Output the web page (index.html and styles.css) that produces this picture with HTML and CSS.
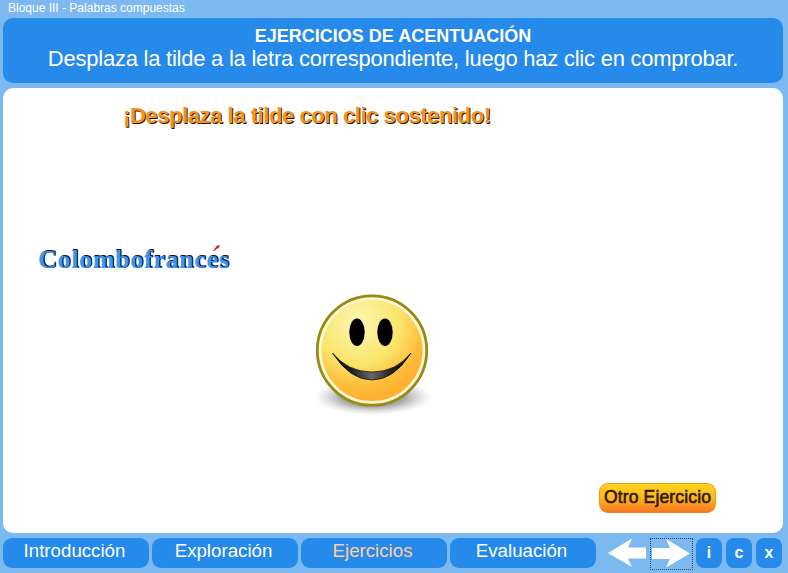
FILE: index.html
```html
<!DOCTYPE html>
<html lang="es">
<head>
<meta charset="utf-8">
<title>Bloque III - Palabras compuestas</title>
<link rel="stylesheet" href="styles.css">
</head>
<body>
<div class="app">
  <div class="block-title"><span>Bloque III - Palabras compuestas</span></div>
  <header class="header">
    <h1><span>EJERCICIOS DE ACENTUACIÓN</span></h1>
    <p><span>Desplaza la tilde a la letra correspondiente, luego haz clic en comprobar.</span></p>
  </header>
  <main class="stage">
    <h2 class="hint"><span>¡Desplaza la tilde con clic sostenido!</span></h2>
    <div class="word"><span>Colombofranc<span class="accented">e<svg class="tilde" width="9" height="7" viewBox="0 0 9 7"><path d="M1 6 5 0.5 8 0.5 7.5 2 2 6Z"/></svg></span>s</span></div>
    <svg class="smiley" width="120" height="126" viewBox="0 0 120 126">
      <defs>
        <radialGradient id="shadow"><stop offset="0" stop-color="#555"/><stop offset=".55" stop-color="#888" stop-opacity=".7"/><stop offset="1" stop-color="#bbb" stop-opacity="0"/></radialGradient>
        <radialGradient id="face" gradientUnits="userSpaceOnUse" cx="47" cy="32" r="76"><stop offset="0" stop-color="#fcf7b4"/><stop offset=".55" stop-color="#f9e56a"/><stop offset=".83" stop-color="#ffbd3c"/><stop offset="1" stop-color="#ffb030"/></radialGradient>
        <linearGradient id="mouth" x1="0" x2="1"><stop offset="0" stop-color="#000"/><stop offset=".25" stop-color="#222"/><stop offset=".5" stop-color="#666"/><stop offset=".75" stop-color="#222"/><stop offset="1" stop-color="#000"/></linearGradient>
      </defs>
      <ellipse cx="61" cy="106" rx="59" ry="18" fill="url(#shadow)"/>
      <circle cx="60" cy="59.500" r="54.7" fill="#fff8cf" stroke="#978b16" stroke-width="2.800"/>
      <circle cx="60" cy="59.500" r="50.5" fill="url(#face)"/>
      <ellipse cx="45" cy="41.200" rx="7.700" ry="13.700"/>
      <ellipse cx="73" cy="41.200" rx="7.700" ry="13.700"/>
      <path d="M20.500 62Q36 81 60 81T99 62Q82 89 60 89T20.500 62Z" fill="url(#mouth)" stroke="#000" stroke-width=".7"/>
    </svg>
    <button class="another"><span>Otro Ejercicio</span></button>
  </main>
  <nav class="nav">
    <a class="tab"><span>Introducción</span></a>
    <a class="tab"><span>Exploración</span></a>
    <a class="tab active"><span>Ejercicios</span></a>
    <a class="tab"><span>Evaluación</span></a>
    <a class="arrow prev"><svg width="40" height="30" viewBox="0 0 40 30"><path d="M1 15 25 0.500 21 9.500H39V20.500H21L25 29Z"/></svg></a>
    <a class="arrow next"><svg width="40" height="30" viewBox="0 0 40 30"><path d="M39 14.500 15 0 19 9H1V20H19L15 28.500Z"/></svg></a>
    <a class="small">i</a>
    <a class="small">c</a>
    <a class="small">x</a>
  </nav>
</div>
</body>
</html>
```
FILE: styles.css
```css
* { box-sizing: border-box; }
body { margin: 0; background: #7db9f1; font-family: "Liberation Sans", Arial, sans-serif; color: #fff; }
.app { width: 788px; height: 573px; padding: 0 5px 0 3px; display: flex; flex-direction: column; overflow: hidden; }
.block-title { height: 18px; padding-left: 5px; font-size: 12px; line-height: 16px; }
.header { height: 65px; border-radius: 10px; background: #258aea; text-align: center; padding-top: 7px; white-space: nowrap; }
.header h1 { margin: 0; font-size: 18px; line-height: 22px; }
.header p { margin: 0; font-size: 22px; line-height: 24px; letter-spacing: -0.24px; }
.stage { height: 445px; margin-top: 5px; border-radius: 10px; background: #fff; display: flex; flex-direction: column; align-items: flex-start; }
.hint { margin: 15px 0 0 120px; font-size: 22px; line-height: 26px; letter-spacing: -0.43px; color: #f5921e; text-shadow: 1px 1px 0 #2a1600; white-space: nowrap; }
.word { margin: 115px 0 0 35px; height: 32px; font: bold 26px/32px "Liberation Serif", "Times New Roman", serif; letter-spacing: 0.68px; color: #3e94f4; text-shadow: 1px 0 0 #0a1a30, 1px -1px 0 #0a1a30; white-space: nowrap; }
.accented { position: relative; }
.tilde { position: absolute; left: 6px; top: 0; fill: #e0152e; }
.smiley { margin: 15px 0 0 309px; }
.another { margin: 66px 0 0 596px; width: 117px; height: 30px; padding: 0 0 2px; border: 1px solid #e89a20; border-bottom-color: #ee7c20; border-radius: 9px; background: linear-gradient(#ffd51c, #ffb51e 50%, #f8781f); color: #301a08; font: 17.5px "Liberation Sans", Arial, sans-serif; -webkit-text-stroke: 0.6px #301a08; letter-spacing: 0.15px; white-space: nowrap; }
.nav { height: 40px; display: flex; padding-top: 5px; }
.tab { width: 146px; height: 30px; margin-right: 3px; border-radius: 9px; background: #258aea; text-align: center; font-size: 18.7px; line-height: 26px; padding-right: 3px; }
.tab.active { color: #ffd0a0; }
.arrow { width: 43px; height: 32px; }
.arrow svg { display: block; fill: #fff; }
.prev { margin-left: 8px; width: 40px; }
.next { margin-left: 3px; border: 1px dotted #345; }
.small { width: 26px; height: 30px; margin-left: 4px; border-radius: 8px; background: #258aea; text-align: center; font-size: 16px; font-weight: bold; line-height: 29px; }
.next + .small { margin-left: 3px; }
```
